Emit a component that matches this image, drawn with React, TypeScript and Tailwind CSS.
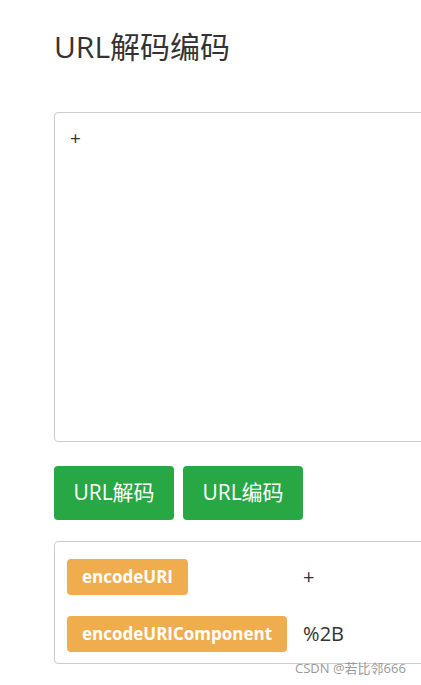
import React, { useState } from "react";

const font = {
  fontFamily: '"Open Sans", "Noto Sans CJK SC", sans-serif',
};

export default function App() {
  const [input] = useState("+");

  return (
    <div className="relative h-[685px] w-[421px] overflow-hidden bg-white text-[#333]" style={font}>
      <div className="pl-[54px] pt-[26px]">
        <h1 className="text-[30px] font-normal leading-[42px] text-[#333]">URL解码编码</h1>

        <div className="mt-[44px] h-[330px] w-[600px] rounded-[4px] border border-[#ccc] px-[15px] py-[10px] text-[19px] leading-[30px] text-[#333]">
          {input}
        </div>

        <div className="mt-[24px] flex gap-[9px]">
          <button className="h-[54px] w-[120px] rounded-[4px] bg-[#28a745] text-[21px] text-white">URL解码</button>
          <button className="h-[54px] w-[120px] rounded-[4px] bg-[#28a745] text-[21px] text-white">URL编码</button>
        </div>

        <div className="mt-[21px] h-[123px] w-[600px] rounded-[4px] border border-[#ccc] px-[12px] pt-[17px]">
          <div className="grid grid-cols-[auto_1fr] items-center gap-x-[16px] gap-y-[21px]">
            <div>
              <span className="inline-flex h-[36px] items-center rounded-[4px] bg-[#f0ad4e] px-[15px] text-[17px] font-bold text-white">
                encodeURI
              </span>
            </div>
            <div className="text-[20px] text-[#333]">+</div>
            <div>
              <span className="inline-flex h-[36px] items-center rounded-[4px] bg-[#f0ad4e] px-[15px] text-[17px] font-bold text-white">
                encodeURIComponent
              </span>
            </div>
            <div className="text-[20px] text-[#333]">%2B</div>
          </div>
        </div>
      </div>

      <div className="absolute left-[295px] top-[660px] text-[13px] leading-[16px] text-[#999]">CSDN @若比邻666</div>
    </div>
  );
}
